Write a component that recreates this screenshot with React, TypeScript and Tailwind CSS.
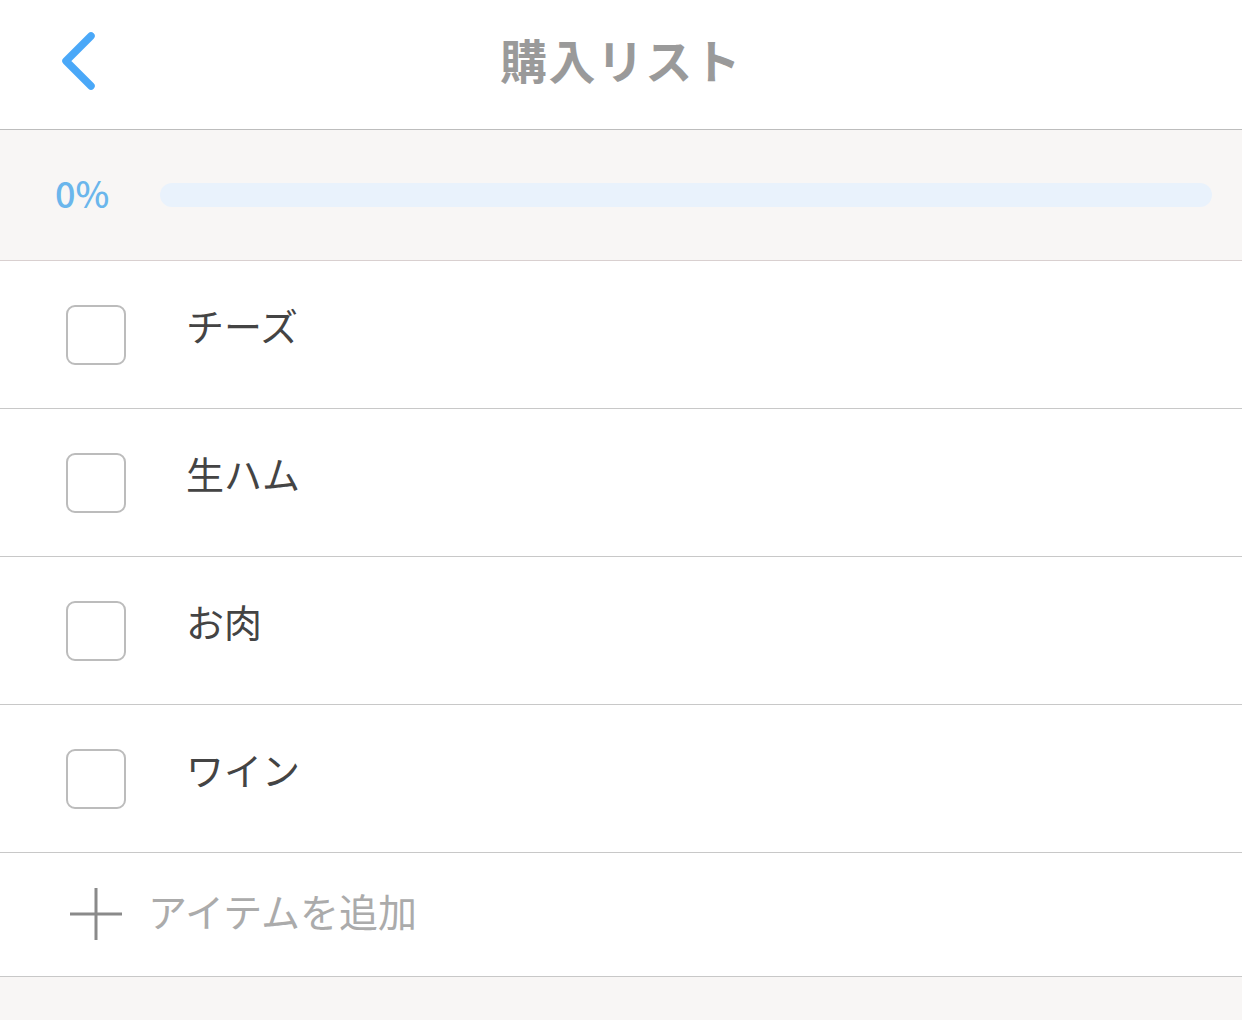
import React, { useState } from 'react'

const FONT = { fontFamily: '"Noto Sans CJK JP", "Noto Sans", sans-serif' }

const initialItems = ['チーズ', '生ハム', 'お肉', 'ワイン']

const App: React.FC = () => {
  const [checked, setChecked] = useState<boolean[]>(initialItems.map(() => false))
  const done = checked.filter(Boolean).length
  const percent = Math.round((done / initialItems.length) * 100)

  return (
    <div className="w-[1242px] h-[1020px] bg-[#f8f6f5] overflow-hidden" style={FONT}>
      {/* Header */}
      <div className="relative h-[130px] bg-white border-b border-[#bdbdbd] flex items-center justify-center">
        <button className="absolute left-[50px] top-[22px] p-1">
          <svg width="48" height="70" viewBox="0 0 48 70" fill="none">
            <path d="M37 10 L12 35 L37 60" stroke="#4aa8f8" strokeWidth="7.5" strokeLinecap="round" strokeLinejoin="round" />
          </svg>
        </button>
        <h1 className="text-[47px] font-bold text-[#9a9a9a] tracking-[0.03em] -mt-[10px]">購入リスト</h1>
      </div>

      {/* Progress */}
      <div className="h-[131px] bg-[#f8f6f5] border-b border-[#d9d0d0] flex items-center pl-[55px] pr-[30px] gap-[48px]">
        <span className="text-[36px] font-medium text-[#6bb6ec] w-[57px] -mt-[6px]">{percent}%</span>
        <div className="flex-1 h-[24px] rounded-full bg-[#e9f2fc] overflow-hidden">
          <div className="h-full bg-[#4aa8f8] rounded-full" style={{ width: `${percent}%` }} />
        </div>
      </div>

      {/* Items */}
      <div className="bg-white">
        {initialItems.map((item, i) => (
          <div key={item} className="h-[148px] border-b border-[#c8c8c8] flex items-center pl-[66px]">
            <button
              onClick={() => setChecked(checked.map((c, j) => (j === i ? !c : c)))}
              className="w-[60px] h-[60px] rounded-[9px] border-2 border-[#bcbcbc] bg-white flex items-center justify-center"
            >
              {checked[i] && (
                <svg width="36" height="36" viewBox="0 0 24 24" fill="none">
                  <path d="M5 12l5 5 9-10" stroke="#4aa8f8" strokeWidth="2.5" strokeLinecap="round" strokeLinejoin="round" />
                </svg>
              )}
            </button>
            <span className="ml-[60px] text-[38px] text-[#444444] -mt-[20px]">{item}</span>
          </div>
        ))}

        {/* Add item */}
        <div className="h-[124px] border-b border-[#c8c8c8] flex items-center pl-[68px]">
          <svg width="56" height="56" viewBox="0 0 56 56" fill="none" className="-mt-[2px]">
            <path d="M28 2 V54 M2 28 H54" stroke="#8a8a8a" strokeWidth="3" />
          </svg>
          <span className="ml-[24px] text-[39px] text-[#ababab] -mt-[8px]">アイテムを追加</span>
        </div>
      </div>
    </div>
  )
}

export default App
